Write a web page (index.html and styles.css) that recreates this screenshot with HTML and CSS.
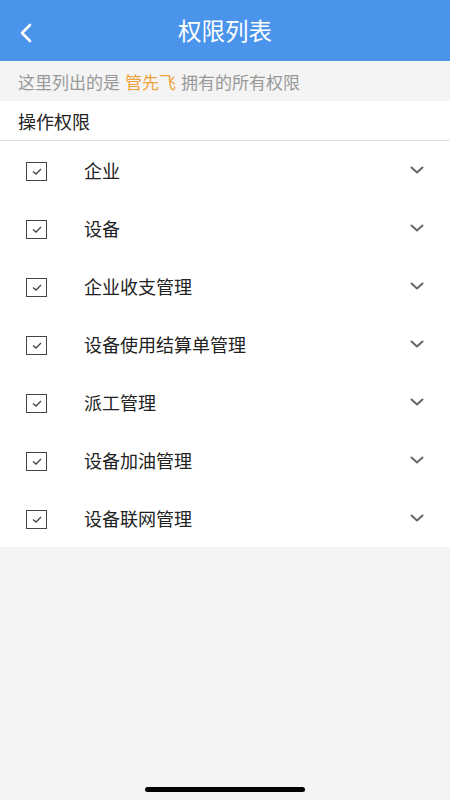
FILE: index.html
```html
<!DOCTYPE html>
<html lang="zh-CN">
<head>
<meta charset="utf-8">
<link rel="stylesheet" href="styles.css">
</head>
<body>
<div class="page">
  <header class="nav">
    <svg class="back" width="16" height="20" viewBox="0 0 16 20"><path d="M12 2 L4 10 L12 18" fill="none" stroke="#fff" stroke-width="2.6" stroke-linecap="round" stroke-linejoin="round"/></svg>
    <h1 class="title">权限列表</h1>
  </header>
  <div class="notice">这里列出的是 <span class="name">管先飞</span> 拥有的所有权限</div>
  <div class="section">操作权限</div>
  <ul class="list">
    <li class="row"><span class="check"><svg width="10" height="7" viewBox="0 0 10 7"><path d="M1 3.5 L4 6 L9 1" fill="none" stroke="#444" stroke-width="1.3"/></svg></span><span class="label">企业</span><svg class="chev" width="14" height="9" viewBox="0 0 14 9"><path d="M1.5 1.5 L7 6.5 L12.5 1.5" fill="none" stroke="#666" stroke-width="2" stroke-linecap="round" stroke-linejoin="round"/></svg></li>
    <li class="row"><span class="check"><svg width="10" height="7" viewBox="0 0 10 7"><path d="M1 3.5 L4 6 L9 1" fill="none" stroke="#444" stroke-width="1.3"/></svg></span><span class="label">设备</span><svg class="chev" width="14" height="9" viewBox="0 0 14 9"><path d="M1.5 1.5 L7 6.5 L12.5 1.5" fill="none" stroke="#666" stroke-width="2" stroke-linecap="round" stroke-linejoin="round"/></svg></li>
    <li class="row"><span class="check"><svg width="10" height="7" viewBox="0 0 10 7"><path d="M1 3.5 L4 6 L9 1" fill="none" stroke="#444" stroke-width="1.3"/></svg></span><span class="label">企业收支管理</span><svg class="chev" width="14" height="9" viewBox="0 0 14 9"><path d="M1.5 1.5 L7 6.5 L12.5 1.5" fill="none" stroke="#666" stroke-width="2" stroke-linecap="round" stroke-linejoin="round"/></svg></li>
    <li class="row"><span class="check"><svg width="10" height="7" viewBox="0 0 10 7"><path d="M1 3.5 L4 6 L9 1" fill="none" stroke="#444" stroke-width="1.3"/></svg></span><span class="label">设备使用结算单管理</span><svg class="chev" width="14" height="9" viewBox="0 0 14 9"><path d="M1.5 1.5 L7 6.5 L12.5 1.5" fill="none" stroke="#666" stroke-width="2" stroke-linecap="round" stroke-linejoin="round"/></svg></li>
    <li class="row"><span class="check"><svg width="10" height="7" viewBox="0 0 10 7"><path d="M1 3.5 L4 6 L9 1" fill="none" stroke="#444" stroke-width="1.3"/></svg></span><span class="label">派工管理</span><svg class="chev" width="14" height="9" viewBox="0 0 14 9"><path d="M1.5 1.5 L7 6.5 L12.5 1.5" fill="none" stroke="#666" stroke-width="2" stroke-linecap="round" stroke-linejoin="round"/></svg></li>
    <li class="row"><span class="check"><svg width="10" height="7" viewBox="0 0 10 7"><path d="M1 3.5 L4 6 L9 1" fill="none" stroke="#444" stroke-width="1.3"/></svg></span><span class="label">设备加油管理</span><svg class="chev" width="14" height="9" viewBox="0 0 14 9"><path d="M1.5 1.5 L7 6.5 L12.5 1.5" fill="none" stroke="#666" stroke-width="2" stroke-linecap="round" stroke-linejoin="round"/></svg></li>
    <li class="row"><span class="check"><svg width="10" height="7" viewBox="0 0 10 7"><path d="M1 3.5 L4 6 L9 1" fill="none" stroke="#444" stroke-width="1.3"/></svg></span><span class="label">设备联网管理</span><svg class="chev" width="14" height="9" viewBox="0 0 14 9"><path d="M1.5 1.5 L7 6.5 L12.5 1.5" fill="none" stroke="#666" stroke-width="2" stroke-linecap="round" stroke-linejoin="round"/></svg></li>
  </ul>
  <div class="home-bar"></div>
</div>
</body>
</html>
```
FILE: styles.css
```css
* { box-sizing: border-box; }
html, body { margin: 0; padding: 0; }
body {
  background: #f4f4f4;
  font-family: "Noto Sans CJK SC", "Noto Sans", sans-serif;
}
.page {
  width: 450px;
  height: 800px;
  position: relative;
  background: #f4f4f4;
  overflow: hidden;
}
.nav {
  height: 61px;
  background: #4a94ec;
  display: flex;
  align-items: center;
  justify-content: center;
  position: relative;
}
.back {
  position: absolute;
  left: 18px;
  top: 23px;
}
.title {
  margin: 0;
  color: #fff;
  font-size: 23.5px;
  font-weight: 400;
  line-height: 1;
  margin-top: 1px;
}
.notice {
  height: 40px;
  padding-left: 18px;
  display: flex;
  align-items: center;
  font-size: 17px;
  color: #999;
}
.notice .name { color: #f0a23a; margin: 0 5px; }
.section {
  height: 40px;
  background: #fff;
  padding-left: 18px;
  display: flex;
  align-items: center;
  font-size: 18px;
  color: #222;
  border-bottom: 1px solid #e0e0e0;
}
.list {
  list-style: none;
  margin: 0;
  padding: 0;
  background: #fff;
}
.row {
  height: 58px;
  display: flex;
  align-items: center;
  padding: 0 26px 0 26px;
}
.check {
  width: 21px;
  height: 19px;
  border: 1.6px solid #444;
  display: flex;
  align-items: center;
  justify-content: center;
  margin-top: 3px;
}
.label {
  margin-left: 37px;
  font-size: 18px;
  color: #222;
  flex: 1;
}
.chev { margin-top: 1px; }
.home-bar {
  position: absolute;
  left: 145px;
  bottom: 8px;
  width: 160px;
  height: 5px;
  border-radius: 3px;
  background: #000;
}
```
